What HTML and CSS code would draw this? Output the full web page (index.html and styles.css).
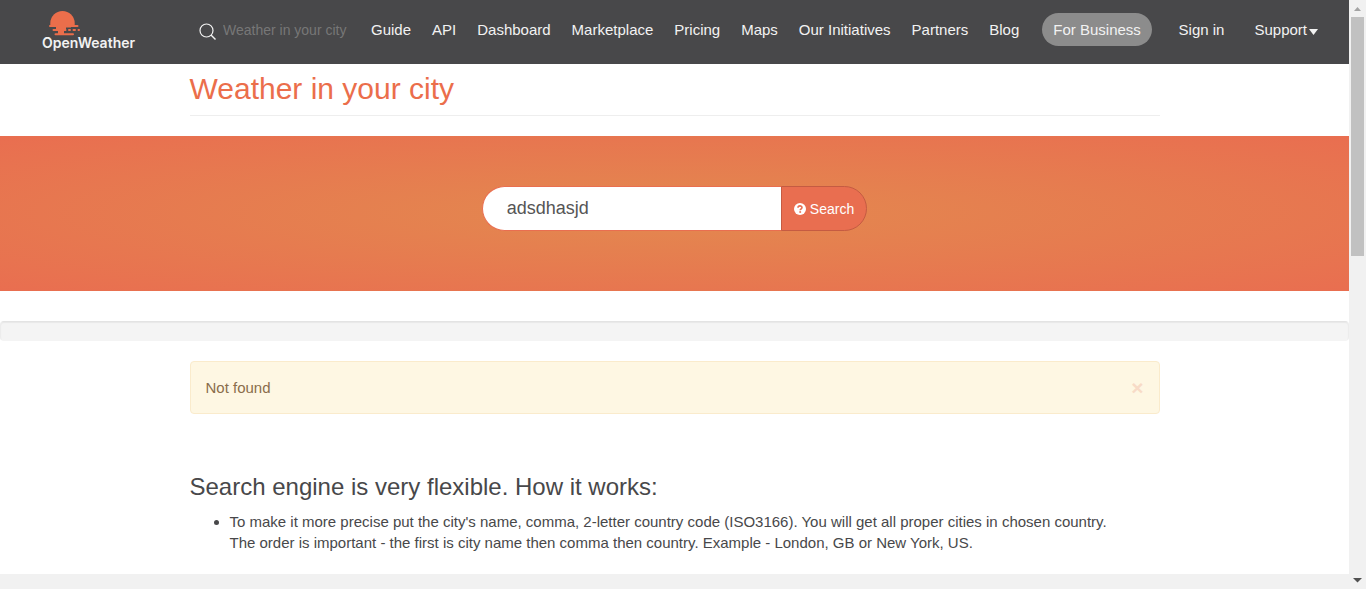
FILE: index.html
```html
<!DOCTYPE html>
<html lang="en">
<head>
<meta charset="utf-8">
<title>Weather in your city - OpenWeather</title>
<link rel="stylesheet" href="styles.css">
</head>
<body>
<div class="window">
  <div class="page">
    <header class="topbar">
      <a class="logo" href="#" aria-label="OpenWeather">
        <svg class="logo-mark" width="33" height="26" viewBox="0 0 33 26" aria-hidden="true">
          <path fill="#eb6e4b" d="M2.300 15.500V13.200A12.200 12.200 0 0 1 26.700 13.200V15.500Z"/>
          <path fill="#eb6e4b" d="M8 15H23V17.500H18V20.500H16V24H10V20.500H8Z"/>
          <path stroke="#eb6e4b" stroke-width="2" stroke-linecap="round" d="M2 16H29.500M5.500 20H17.500M21 20H22M25.500 20H27M30.500 20H31M7.500 24.300H25"/>
        </svg>
        <span class="logo-name">OpenWeather</span>
      </a>
      <form class="nav-search" role="search">
        <svg width="18" height="18" viewBox="0 0 18 18" fill="none" stroke="#f2f2f2" aria-hidden="true">
          <circle cx="7.500" cy="7.500" r="6.500" stroke-width="1.200"/>
          <path d="M12 12L16.500 16.500" stroke-width="1.400"/>
        </svg>
        <input type="text" placeholder="Weather in your city" aria-label="Weather in your city">
      </form>
      <nav class="menu">
        <a href="#">Guide</a>
        <a href="#">API</a>
        <a href="#">Dashboard</a>
        <a href="#">Marketplace</a>
        <a href="#">Pricing</a>
        <a href="#">Maps</a>
        <a href="#">Our Initiatives</a>
        <a href="#">Partners</a>
        <a href="#">Blog</a>
        <a class="pill" href="#">For Business</a>
      </nav>
      <nav class="account">
        <a href="#">Sign in</a>
        <a class="support" href="#">Support<svg width="9" height="6" viewBox="0 0 9 6" aria-hidden="true"><path fill="#f2f2f2" d="M0 0H9L4.500 6Z"/></svg></a>
      </nav>
    </header>
    <main>
      <div class="container">
        <h1>Weather in your city</h1>
      </div>
      <section class="banner">
        <form class="city-search">
          <input type="text" value="adsdhasjd" aria-label="City name">
          <button type="submit">
            <svg width="12" height="12" viewBox="0 0 12 12" aria-hidden="true">
              <circle cx="6" cy="6" r="6" fill="#fff"/>
              <path d="M4 4.800C4 2.300 8 2.300 8 4.600C8 5.800 6.200 5.800 6.200 7.300" fill="none" stroke="#e96e50" stroke-width="1.600"/>
              <path d="M5.300 8.200H7.100V9.800H5.300Z" fill="#e96e50"/>
            </svg>
            <span>Search</span>
          </button>
        </form>
      </section>
      <div class="well"></div>
      <div class="container">
        <div class="alert" role="alert">
          <span>Not found</span>
          <button type="button" class="close" aria-label="Close">×</button>
        </div>
        <h2>Search engine is very flexible. How it works:</h2>
        <ul>
          <li>To make it more precise put the city's name, comma, 2-letter country code (ISO3166). You will get all proper cities in chosen country.<br>The order is important - the first is city name then comma then country. Example - London, GB or New York, US.</li>
        </ul>
      </div>
    </main>
    <footer class="footer"></footer>
  </div>
  <div class="scrollbar" aria-hidden="true">
    <svg class="arrow" viewBox="0 0 17 17"><path fill="#a3a3a3" d="M5 11L8.500 7L12 11Z"/></svg>
    <div class="track"><div class="thumb"></div></div>
    <svg class="arrow" viewBox="0 0 17 17"><path fill="#505050" d="M4 6L8.500 10.500L13 6Z"/></svg>
  </div>
</div>
</body>
</html>
```

FILE: styles.css
```css
* {
  box-sizing: border-box;
}

body {
  margin: 0;
  background: #fff;
  color: #48484a;
  font-family: "Liberation Sans", Arial, sans-serif;
  font-size: 15px;
  line-height: 21px;
}

input,
button {
  font-family: inherit;
}

.window {
  display: flex;
  height: 100vh;
  overflow: hidden;
}

.page {
  flex: 1;
  display: flex;
  flex-direction: column;
  min-width: 0;
}

.topbar {
  display: flex;
  align-items: center;
  height: 64px;
  flex: none;
  padding: 0 31px 4px 42px;
  background: #48484a;
}

.topbar a {
  color: #f2f2f2;
  text-decoration: none;
  white-space: nowrap;
}

.logo {
  display: flex;
  flex-direction: column;
  width: 157px;
}

.logo-mark {
  margin-left: 6px;
}

.topbar .logo-name {
  font-family: Inter, "Liberation Sans", sans-serif;
  font-size: 14px;
  font-weight: 600;
  line-height: 14px;
}

.nav-search {
  display: flex;
  align-items: center;
  gap: 6px;
  width: 172px;
}

.nav-search svg {
  flex: none;
  margin-top: 4px;
}

.nav-search input {
  width: 100%;
  min-width: 0;
  padding: 0;
  border: 0;
  outline: 0;
  background: transparent;
  color: #f2f2f2;
  font-size: 14px;
}

.nav-search input::placeholder {
  color: #777;
  opacity: 1;
}

.menu,
.account {
  display: flex;
  align-items: center;
  gap: 21px;
  padding-bottom: 2px;
}

.menu .pill {
  margin-left: 2px;
  padding: 6px 11px;
  border-radius: 17px;
  background: #8c8c8c;
}

.account {
  gap: 30px;
  margin-left: auto;
}

.support {
  display: flex;
  align-items: center;
}

.support svg {
  margin: 5px 0 0 2px;
}

.container {
  width: 970px;
  max-width: 100%;
  margin: 0 auto;
}

h1 {
  margin: 0 0 20px;
  padding: 8px 0 9px;
  border-bottom: 1px solid #eee;
  color: #eb6e4b;
  font-size: 30px;
  font-weight: 400;
  line-height: 34px;
}

.banner {
  padding: 50px 0 60px;
  background: radial-gradient(ellipse at center, #e3894f 0%, #e96e50 100%);
}

.city-search {
  display: flex;
  justify-content: center;
  height: 45px;
}

.city-search input {
  width: 299px;
  padding: 0 24px;
  border: 1px solid #e96e50;
  border-right: 0;
  border-radius: 23px 0 0 23px;
  outline: 0;
  background: #fff;
  color: #555;
  font-size: 18px;
}

.city-search button {
  display: flex;
  align-items: center;
  gap: 4px;
  padding: 0 12px;
  border: 1px solid #c55b42;
  border-radius: 0 23px 23px 0;
  background: #e96e50;
  color: #fff;
  font-size: 14px;
}

.well {
  height: 20px;
  margin: 30px 0 20px;
  border: 1px solid #ececec;
  border-top-color: #e3e3e3;
  border-bottom-color: #f4f4f4;
  border-radius: 4px;
  background: #f4f4f4;
  box-shadow: inset 0 1px 1px rgba(0, 0, 0, 0.05);
}

.alert {
  display: flex;
  align-items: center;
  justify-content: space-between;
  padding: 15px;
  border: 1px solid #faebcc;
  border-radius: 4px;
  background: #fef7e3;
  color: #8a6d4b;
}

.close {
  padding: 0;
  border: 0;
  background: none;
  color: #f8dbc7;
  font-size: 21px;
  font-weight: 700;
  line-height: 21px;
}

h2 {
  margin: 60px 0 11px;
  font-size: 24px;
  font-weight: 400;
  line-height: 26px;
}

ul {
  margin: 0 0 21px;
  padding-left: 40px;
}

.footer {
  flex: 1;
  background: #f1f1f1;
}

.scrollbar {
  display: flex;
  flex-direction: column;
  width: 17px;
  background: #f1f1f1;
}

.arrow {
  width: 17px;
  height: 17px;
}

.track {
  flex: 1;
  padding: 0 2px;
}

.thumb {
  height: 43%;
  background: #c1c1c1;
}
```
